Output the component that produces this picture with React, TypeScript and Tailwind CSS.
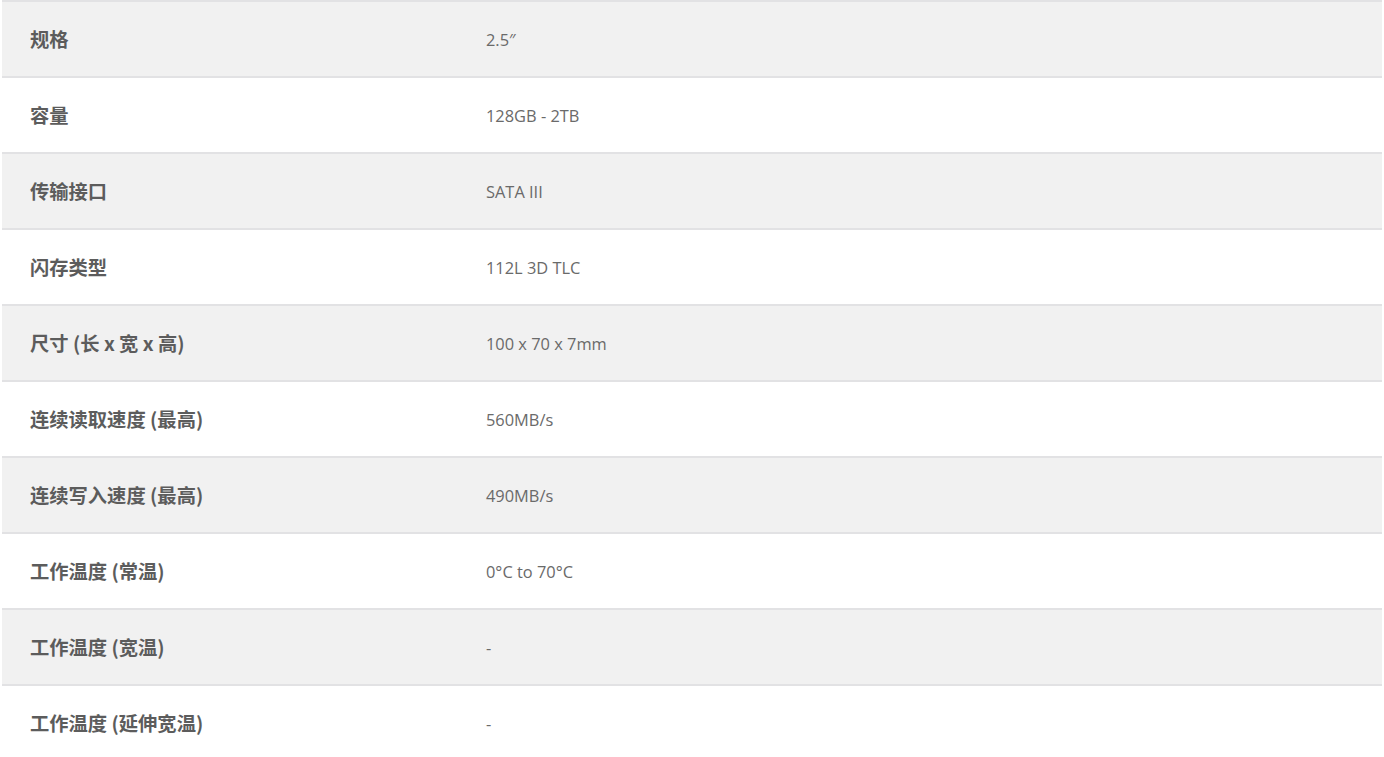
const specs = [
  ["规格", "2.5″"],
  ["容量", "128GB - 2TB"],
  ["传输接口", "SATA III"],
  ["闪存类型", "112L 3D TLC"],
  ["尺寸 (长 x 宽 x 高)", "100 x 70 x 7mm"],
  ["连续读取速度 (最高)", "560MB/s"],
  ["连续写入速度 (最高)", "490MB/s"],
  ["工作温度 (常温)", "0°C to 70°C"],
  ["工作温度 (宽温)", "-"],
  ["工作温度 (延伸宽温)", "-"],
];

export default function App() {
  return (
    <div className="min-h-screen bg-white pl-[2px] pr-[2px]">
      <div className="border-t-2 border-[#e2e2e4]">
        {specs.map(([label, value], i) => (
          <div
            key={label}
            className={
              "flex h-[76px] items-center border-b-2 border-[#e2e2e4] " +
              (i % 2 === 0 ? "bg-[#f1f1f1]" : "bg-white")
            }
          >
            <div className="w-[456px] pl-[28px] font-['Noto_Sans_CJK_SC',sans-serif] text-[19.3px] font-bold text-[#5c5c5c]">
              {label}
            </div>
            <div className="pl-[28px] pt-[2px] font-['Open_Sans','Noto_Sans_CJK_SC',sans-serif] text-[16.4px] text-[#6a6a6a]">
              {value}
            </div>
          </div>
        ))}
      </div>
    </div>
  );
}
